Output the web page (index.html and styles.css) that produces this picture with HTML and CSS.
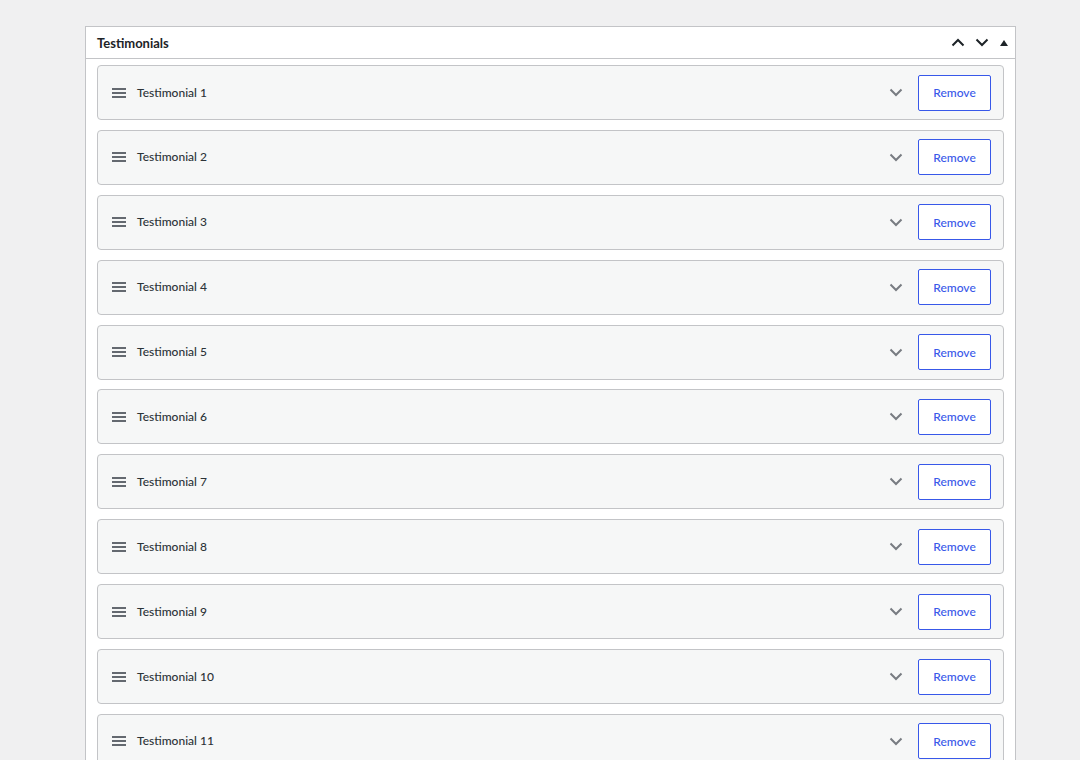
FILE: index.html
```html
<!DOCTYPE html>
<html>
<head>
<meta charset="utf-8">
<link rel="stylesheet" href="styles.css">
</head>
<body>
<div class="page">
  <div class="panel">
    <div class="panel-head">
      <h2 class="panel-title">Testimonials</h2>
      <div class="head-actions">
        <span class="hbtn"><svg width="14" height="9" viewBox="0 0 14 9"><path d="M1.5 7.5L7 2l5.5 5.5" fill="none" stroke="#1d2327" stroke-width="2"/></svg></span>
        <span class="hbtn"><svg width="14" height="9" viewBox="0 0 14 9"><path d="M1.5 1.5L7 7l5.5-5.5" fill="none" stroke="#1d2327" stroke-width="2"/></svg></span>
        <span class="hbtn tri"><svg width="8" height="6" viewBox="0 0 8 6"><path d="M0 6L4 0l4 6z" fill="#1d2327"/></svg></span>
      </div>
    </div>
    <div class="panel-body" id="list"></div>
  </div>
</div>
<script src="app.js"></script>
</body>
</html>
```
FILE: app.js
```js
const list = document.getElementById('list');
for (let i = 1; i <= 11; i++) {
  const row = document.createElement('div');
  row.className = 'item';
  row.innerHTML =
    '<span class="drag"><svg width="14" height="10" viewBox="0 0 14 10"><path d="M0 1h14M0 5h14M0 9h14" stroke="#646970" stroke-width="2"/></svg></span>' +
    '<span class="item-title">Testimonial ' + i + '</span>' +
    '<span class="toggle"><svg width="14" height="9" viewBox="0 0 14 9"><path d="M1.5 1.5L7 7l5.5-5.5" fill="none" stroke="#787c82" stroke-width="2"/></svg></span>' +
    '<button class="remove">Remove</button>';
  list.appendChild(row);
}
```
FILE: styles.css
```css
* { box-sizing: border-box; }
html, body { margin: 0; padding: 0; }
body {
  background: #f0f0f1;
  font-family: "Lato", "Noto Sans", "DejaVu Sans", sans-serif;
  color: #1d2327;
  height: 760px;
  overflow: hidden;
}
.page { padding: 26px 0 0 85px; }
.panel {
  width: 931px;
  background: #fff;
  border: 1px solid #c3c4c7;
}
.panel-head {
  height: 32px;
  display: flex;
  align-items: center;
  justify-content: space-between;
  border-bottom: 1px solid #c3c4c7;
  padding: 0 6px 0 11px;
}
.panel-title {
  margin: 0;
  font-size: 13px;
  font-weight: 700;
  color: #1d2327;
}
.head-actions { display: flex; align-items: center; gap: 10px; }
.hbtn { display: flex; align-items: center; justify-content: center; width: 14px; height: 14px; }
.hbtn.tri { width: 10px; }
.panel-body {
  padding: 6px 11px 11px;
  display: flex;
  flex-direction: column;
  gap: 9.9px;
}
.item {
  height: 55px;
  flex-shrink: 0;
  background: #f6f7f7;
  border: 1px solid #c3c4c7;
  border-radius: 4px;
  display: flex;
  align-items: center;
  padding: 0 12px 0 14px;
}
.drag { display: flex; width: 14px; margin-right: 11px; }
.item-title {
  flex: 1;
  font-size: 12px;
  font-weight: 500;
  color: #2c3338;
  padding-bottom: 1px;
}
.toggle { display: flex; width: 14px; margin-right: 15px; }
.remove {
  width: 73px;
  height: 36px;
  background: #fff;
  border: 1px solid #3858e9;
  border-radius: 2px;
  color: #3858e9;
  font-family: inherit;
  font-size: 12px;
  font-weight: 500;
  padding: 0;
}
```
